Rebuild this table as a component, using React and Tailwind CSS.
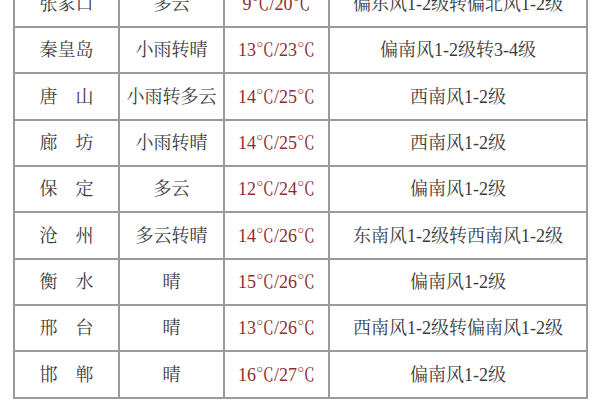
import React from "react";

const rows = [
  ["张家口", "多云", "9℃/20℃", "偏东风1-2级转偏北风1-2级", 47],
  ["秦皇岛", "小雨转晴", "13℃/23℃", "偏南风1-2级转3-4级", 46],
  ["唐　山", "小雨转多云", "14℃/25℃", "西南风1-2级", 47],
  ["廊　坊", "小雨转晴", "14℃/25℃", "西南风1-2级", 46],
  ["保　定", "多云", "12℃/24℃", "偏南风1-2级", 46],
  ["沧　州", "多云转晴", "14℃/26℃", "东南风1-2级转西南风1-2级", 47],
  ["衡　水", "晴", "15℃/26℃", "偏南风1-2级", 46],
  ["邢　台", "晴", "13℃/26℃", "西南风1-2级转偏南风1-2级", 46],
  ["邯　郸", "晴", "16℃/27℃", "偏南风1-2级", 47],
];

const font = {
  fontFamily:
    '"Liberation Serif", "Noto Serif CJK SC", "Noto Sans CJK SC", serif',
};

export default function App() {
  return (
    <div className="w-[600px] h-[400px] overflow-hidden bg-white" style={font}>
      <div className="ml-[13px] mt-[-19px] w-[575px] border-l-2 border-[#9a9a9a]">
        {rows.map(([city, wx, temp, wind, h], i) => (
          <div
            key={i}
            className="flex border-b-2 border-[#9a9a9a] text-[18px] leading-none"
            style={{ height: h }}
          >
            <div className="w-[105px] flex items-center justify-center border-r-2 border-[#9a9a9a] text-[#3c3c3c]">
              {city}
            </div>
            <div className="w-[105px] flex items-center justify-center border-r-2 border-[#9a9a9a] text-[#3c3c3c]">
              {wx}
            </div>
            <div className="w-[105px] flex items-center justify-center border-r-2 border-[#9a9a9a] text-[#8e2f2f]">
              {temp}
            </div>
            <div className="flex-1 flex items-center justify-center border-r-2 border-[#9a9a9a] text-[#3c3c3c]">
              {wind}
            </div>
          </div>
        ))}
      </div>
    </div>
  );
}
